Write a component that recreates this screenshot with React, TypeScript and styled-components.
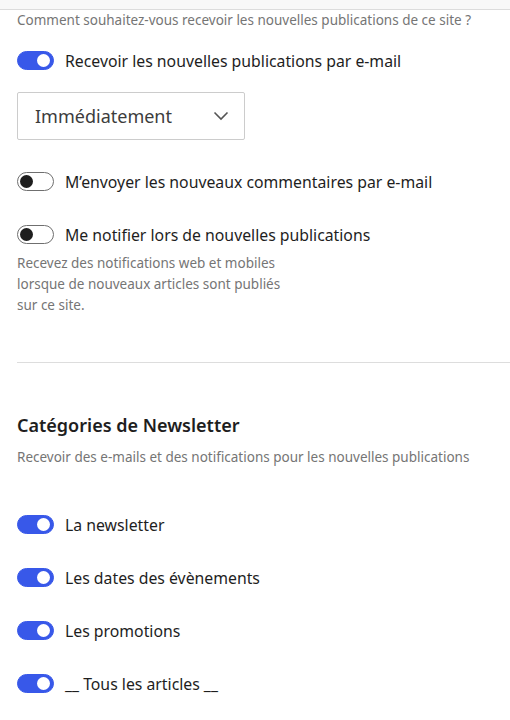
import styled, { createGlobalStyle } from "styled-components";
import { useState } from "react";

const GlobalStyle = createGlobalStyle`
  body {
    margin: 0;
    background: #fff;
    font-family: "Noto Sans", "Open Sans", sans-serif;
    color: #1e1e1e;
  }
`;

const S = {
  TopStrip: styled.div`
    height: 9px;
    background: #f8f8f8;
    border-bottom: 1px solid #dcdcdc;
  `,
  Section: styled.section`
    padding: 0 0 0 17px;
    display: flex;
    flex-direction: column;
  `,
  Hint: styled.p<{ $narrow?: boolean }>`
    margin: 0;
    font-size: 13.5px;
    line-height: 21px;
    color: #757575;
    max-width: ${p => (p.$narrow ? "270px" : "none")};
  `,
  Row: styled.label`
    display: flex;
    align-items: center;
    gap: 11px;
    height: 19px;
    cursor: pointer;
  `,
  Label: styled.span`
    font-size: 15.8px;
    color: #1e1e1e;
  `,
  Track: styled.span<{ $on: boolean }>`
    position: relative;
    box-sizing: border-box;
    width: 37px;
    height: 19px;
    border-radius: 10px;
    flex-shrink: 0;
    background: ${p => (p.$on ? "#3858e9" : "#fff")};
    border: 1px solid ${p => (p.$on ? "#3858e9" : "#6f6f6f")};
  `,
  Knob: styled.span<{ $on: boolean }>`
    position: absolute;
    top: 2px;
    left: ${p => (p.$on ? "19px" : "2px")};
    width: 13px;
    height: 13px;
    border-radius: 50%;
    background: ${p => (p.$on ? "#fff" : "#1e1e1e")};
  `,
  Select: styled.div`
    box-sizing: border-box;
    width: 228px;
    height: 48px;
    border: 1px solid #cccccc;
    border-radius: 2px;
    display: flex;
    align-items: center;
    justify-content: space-between;
    padding: 0 15px 0 17px;
    font-size: 18px;
    color: #3c3c3c;
  `,
  Divider: styled.hr`
    margin: 0;
    border: none;
    border-top: 1px solid #dddddd;
  `,
  Heading: styled.h2`
    margin: 0;
    font-size: 18px;
    font-weight: 600;
    color: #1e1e1e;
    line-height: 24px;
  `,
  Spacer: styled.div<{ $h: number }>`
    height: ${p => p.$h}px;
    flex-shrink: 0;
  `,
};

function Toggle({ on, label, onChange }: { on: boolean; label: string; onChange: () => void }) {
  return (
    <S.Row onClick={onChange}>
      <S.Track $on={on}>
        <S.Knob $on={on} />
      </S.Track>
      <S.Label>{label}</S.Label>
    </S.Row>
  );
}

function Chevron() {
  return (
    <svg width="16" height="10" viewBox="0 0 16 10" fill="none">
      <path d="M1.5 1.5L8 8L14.5 1.5" stroke="#555" strokeWidth="1.6" />
    </svg>
  );
}

const categories = [
  "La newsletter",
  "Les dates des évènements",
  "Les promotions",
  "__ Tous les articles __",
];

export default function App() {
  const [email, setEmail] = useState(true);
  const [comments, setComments] = useState(false);
  const [notify, setNotify] = useState(false);
  const [cats, setCats] = useState(categories.map(() => true));

  const toggleCat = (i: number) =>
    setCats(prev => prev.map((v, j) => (j === i ? !v : v)));

  return (
    <>
      <GlobalStyle />
      <S.TopStrip />
      <S.Section>
        <S.Hint>Comment souhaitez-vous recevoir les nouvelles publications de ce site ?</S.Hint>
        <S.Spacer $h={20} />
        <Toggle on={email} label="Recevoir les nouvelles publications par e-mail" onChange={() => setEmail(!email)} />
        <S.Spacer $h={22} />
        <S.Select>
          <span>Immédiatement</span>
          <Chevron />
        </S.Select>
        <S.Spacer $h={32} />
        <Toggle on={comments} label="M’envoyer les nouveaux commentaires par e-mail" onChange={() => setComments(!comments)} />
        <S.Spacer $h={34} />
        <Toggle on={notify} label="Me notifier lors de nouvelles publications" onChange={() => setNotify(!notify)} />
        <S.Spacer $h={9} />
        <S.Hint $narrow>
          Recevez des notifications web et mobiles lorsque de nouveaux articles sont publiés sur ce site.
        </S.Hint>
        <S.Spacer $h={46} />
      </S.Section>
      <S.Section>
        <S.Divider />
        <S.Spacer $h={50} />
        <S.Heading>Catégories de Newsletter</S.Heading>
        <S.Spacer $h={10} />
        <S.Hint>Recevoir des e-mails et des notifications pour les nouvelles publications</S.Hint>
        <S.Spacer $h={47} />
        {categories.map((c, i) => (
          <div key={c}>
            {i > 0 && <S.Spacer $h={34} />}
            <Toggle on={cats[i]} label={c} onChange={() => toggleCat(i)} />
          </div>
        ))}
      </S.Section>
    </>
  );
}
